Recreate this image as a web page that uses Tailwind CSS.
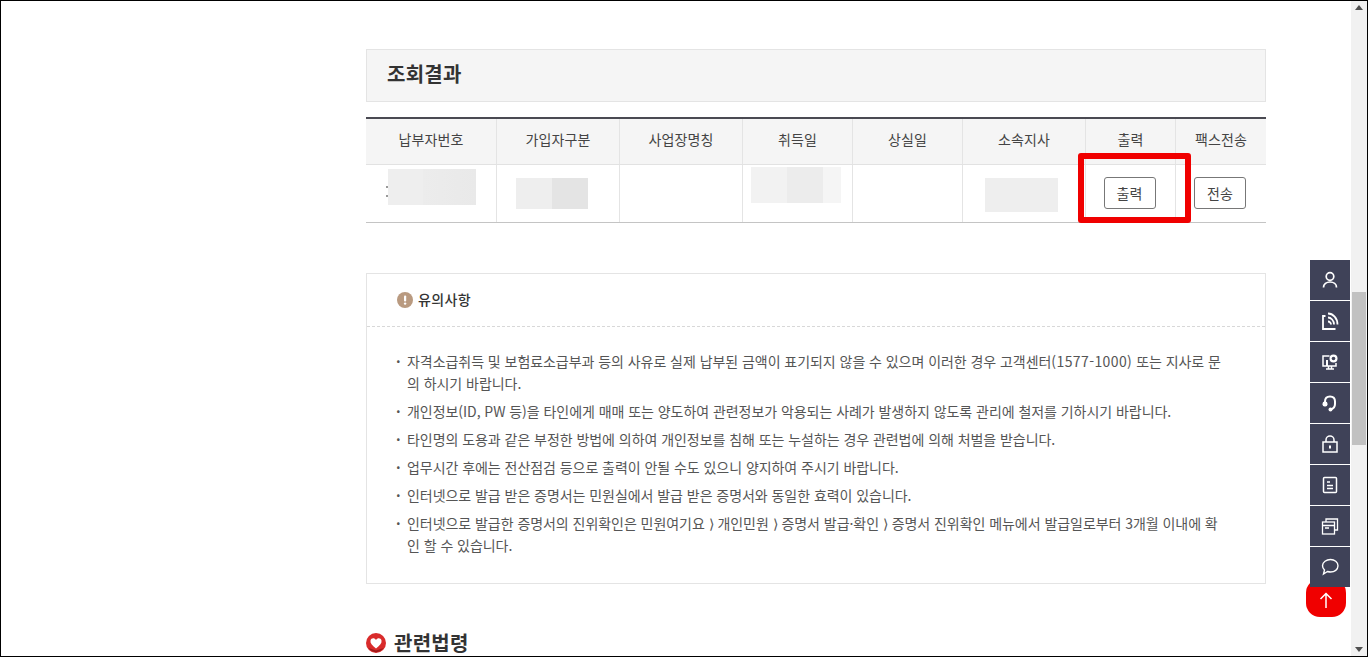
<!DOCTYPE html>
<html lang="ko">
<head>
<meta charset="utf-8">
<title>조회결과</title>
<script src="https://cdn.jsdelivr.net/npm/@tailwindcss/browser@4"></script>
</head>
<body class="bg-white overflow-hidden">
<div class="relative w-[1368px] h-[657px] overflow-hidden border border-black bg-white text-[#444] font-['Noto_Sans_CJK_KR','Noto_Sans',sans-serif]">
  <div class="absolute right-0 top-0 bottom-0 w-[16px] bg-[#f1f1f1] flex flex-col">
    <div class="absolute left-[1px] top-[291px] w-[14px] h-[153px] bg-[#c1c1c1]"></div>
    <svg class="absolute left-[4px] top-[4px]" width="8" height="5" viewBox="0 0 8 5"><path d="M0 5L4 0L8 5Z" fill="#505050"/></svg>
    <svg class="absolute left-[4px] bottom-[4px]" width="8" height="5" viewBox="0 0 8 5"><path d="M0 0L4 5L8 0Z" fill="#505050"/></svg>
  </div>

  <main class="ml-[365px] w-[900px] pt-[48px]">
    <div class="h-[53px] bg-[#f5f5f5] border border-[#e4e4e4] pl-[20px] pb-[3px] flex items-center">
      <h2 class="text-[20px] font-bold text-[#333] tracking-[0.25px]">조회결과</h2>
    </div>

    <div class="mt-[15px] border-t-2 border-[#4a4a52] border-b border-b-[#c4c4c4] text-[14px]">
      <div class="grid grid-cols-[131px_123px_123px_110px_110px_123px_90px_90px] h-[46px] bg-[#f5f5f5] border-b border-[#e2e2e2] tracking-[0.1px]">
        <div class="flex items-center justify-center border-r border-[#e4e4e4] pb-[5px]">납부자번호</div>
        <div class="flex items-center justify-center border-r border-[#e4e4e4] pb-[5px]">가입자구분</div>
        <div class="flex items-center justify-center border-r border-[#e4e4e4] pb-[5px]">사업장명칭</div>
        <div class="flex items-center justify-center border-r border-[#e4e4e4] pb-[5px]">취득일</div>
        <div class="flex items-center justify-center border-r border-[#e4e4e4] pb-[5px]">상실일</div>
        <div class="flex items-center justify-center border-r border-[#e4e4e4] pb-[5px]">소속지사</div>
        <div class="flex items-center justify-center border-r border-[#e4e4e4] pb-[5px]">출력</div>
        <div class="flex items-center justify-center pb-[5px]">팩스전송</div>
      </div>
      <div class="grid grid-cols-[131px_123px_123px_110px_110px_123px_90px_90px] h-[57px]">
        <div class="border-r border-[#e4e4e4] pl-[20px] pt-[4px] flex items-start">
          <div class="flex flex-col gap-[7px] pt-[17px]"><div class="w-[2px] h-[2px] bg-[#999]"></div><div class="w-[2px] h-[2px] bg-[#999]"></div></div>
          <div class="w-[88px] h-[36px] bg-[linear-gradient(90deg,#eeeeee_40%,#ececec_40%,#e9e9e9_100%)]"></div>
        </div>
        <div class="border-r border-[#e4e4e4] pl-[19px] pt-[13px]"><div class="flex w-[72px] h-[31px]"><div class="w-[36px] bg-[#eeeeee]"></div><div class="w-[36px] bg-[#e4e4e4]"></div></div></div>
        <div class="border-r border-[#e4e4e4]"></div>
        <div class="border-r border-[#e4e4e4] pl-[8px] pt-[2px]"><div class="w-[90px] h-[36px] bg-[linear-gradient(90deg,#f2f2f2_40%,#ececec_40%,#ececec_80%,#f5f5f5_80%)]"></div></div>
        <div class="border-r border-[#e4e4e4]"></div>
        <div class="border-r border-[#e4e4e4] pl-[22px] pt-[13px]"><div class="w-[73px] h-[34px] bg-[#eeeeee]"></div></div>
        <div class="border-r border-[#e4e4e4] flex items-center justify-center pr-[2px] pb-[1px]"><button class="w-[52px] h-[32px] bg-white border border-[#777] rounded-[3px] text-[14px] tracking-[0.1px]">출력</button></div>
        <div class="flex items-center pl-[18px] pb-[1px]"><button class="w-[52px] h-[32px] bg-white border border-[#777] rounded-[3px] text-[14px] tracking-[0.1px]">전송</button></div>
      </div>
    </div>

    <section class="mt-[50px] h-[311px] border border-[#e4e4e4]">
      <div class="h-[53px] border-b border-dashed border-[#d8d8d8] pl-[30px] pb-[1px] flex items-center gap-[5px]">
        <svg width="16" height="16" viewBox="0 0 16 16"><circle cx="8" cy="8" r="8" fill="#b99a80"/><rect x="7" y="3.5" width="2.2" height="6" rx="1" fill="#fff"/><circle cx="8.1" cy="11.6" r="1.2" fill="#fff"/></svg>
        <h3 class="text-[14px] font-medium text-[#333] tracking-[0.4px]">유의사항</h3>
      </div>
      <ul class="pt-[23px] pl-[29px] pr-[30px] text-[14px] leading-[22px] tracking-[-0.05px] text-[#555] flex flex-col gap-[6px]">
        <li class="relative pl-[11px] before:content-['·'] before:absolute before:left-0 before:font-bold">자격소급취득 및 보험료소급부과 등의 사유로 실제 납부된 금액이 표기되지 않을 수 있으며 이러한 경우 고객센터<span class="tracking-[0.4px]">(1577-1000)</span> 또는 지사로 문<br>의 하시기 바랍니다.</li>
        <li class="relative pl-[11px] before:content-['·'] before:absolute before:left-0 before:font-bold">개인정보(ID, PW 등)을 타인에게 매매 또는 양도하여 관련정보가 악용되는 사례가 발생하지 않도록 관리에 철저를 기하시기 바랍니다.</li>
        <li class="relative pl-[11px] before:content-['·'] before:absolute before:left-0 before:font-bold">타인명의 도용과 같은 부정한 방법에 의하여 개인정보를 침해 또는 누설하는 경우 관련법에 의해 처벌을 받습니다.</li>
        <li class="relative pl-[11px] before:content-['·'] before:absolute before:left-0 before:font-bold">업무시간 후에는 전산점검 등으로 출력이 안될 수도 있으니 양지하여 주시기 바랍니다.</li>
        <li class="relative pl-[11px] before:content-['·'] before:absolute before:left-0 before:font-bold">인터넷으로 발급 받은 증명서는 민원실에서 발급 받은 증명서와 동일한 효력이 있습니다.</li>
        <li class="relative pl-[11px] before:content-['·'] before:absolute before:left-0 before:font-bold">인터넷으로 발급한 증명서의 진위확인은 민원여기요 ⟩ 개인민원 ⟩ 증명서 발급·확인 ⟩ 증명서 진위확인 메뉴에서 발급일로부터 3개월 이내에 확<br>인 할 수 있습니다.</li>
      </ul>
    </section>

    <div class="mt-[44px] flex items-center gap-[8px]">
      <svg width="20" height="20" viewBox="0 0 20 20"><circle cx="10" cy="10" r="10" fill="#d92b2b"/><path d="M10 15.500C6 12.500 4 10 4.500 7.500C5 5 8.500 4.500 10 7C11.500 4.500 15 5 15.500 7.500C16 10 14 12.500 10 15.500Z" fill="#fff"/><path d="M2.500 15C6 20.500 14 20.500 17.500 15L10 17.500Z" fill="#9e1a1a"/></svg>
      <h2 class="text-[20px] font-bold text-[#333] tracking-[0.25px]">관련법령</h2>
    </div>
  </main>

  <!-- red box highlight -->
  <div class="absolute left-[1077px] top-[152px] w-[113px] h-[70px] border-[6px] border-[#f00000] rounded-[3px]"></div>

  <!-- top button -->
  <div class="absolute left-[1305px] top-[578px] w-[40px] h-[38px] bg-[#f00000] rounded-[14px] flex items-end justify-center pb-[9px]">
    <svg width="14" height="16" viewBox="0 0 14 16" fill="none" stroke="#fff" stroke-width="1.500"><path d="M7 16V1M1.500 7L7 1.500L12.500 7"/></svg>
  </div>

  <!-- side quick menu -->
  <nav class="absolute left-[1309px] top-[259px] w-[40px] flex flex-col gap-[1px]">
    <a class="h-[40px] bg-[#3f4258] flex items-center justify-center"><svg width="18" height="18" viewBox="0 0 18 18" fill="none" stroke="#fff" stroke-width="1.700"><circle cx="9" cy="5.500" r="3.800"/><path d="M2.500 16.500C2.500 12.800 5.500 11 9 11S15.500 12.800 15.500 16.500"/></svg></a>
    <a class="h-[40px] bg-[#3f4258] flex items-center justify-center"><svg width="18" height="18" viewBox="0 0 18 18" fill="none" stroke="#fff" stroke-width="1.800"><path d="M4.500 4H2V17H14.500"/><path d="M7 1.500C12 1.500 16.500 6 16.500 12.500M7 5.500C10 5.500 13 8.500 13 12.500M7 9.500C8.500 9.500 10 11 10 12.500"/></svg></a>
    <a class="h-[40px] bg-[#3f4258] flex items-center justify-center"><svg width="18" height="18" viewBox="0 0 18 18" fill="none" stroke="#fff" stroke-width="1.500"><path d="M8.500 3H2V13H15V10"/><path d="M5 16H13M7.500 13V16M10.500 13V16"/><rect x="5" y="7" width="2" height="6" fill="#fff" stroke="none"/><circle cx="12.500" cy="5.500" r="4" fill="#fff" stroke="none"/><circle cx="12.500" cy="5.500" r="1.800" fill="#3f4258" stroke="none"/></svg></a>
    <a class="h-[40px] bg-[#3f4258] flex items-center justify-center"><svg width="18" height="18" viewBox="0 0 18 18" fill="none" stroke="#fff" stroke-width="2"><path d="M4 9V7.500C4 4.500 6 2.500 9 2.500S14 4.500 14 7.500V10C14 12.500 12.500 14.500 10 15.500"/><rect x="1.500" y="7.500" width="5" height="5" rx="2.200" fill="#fff" stroke="none"/><circle cx="9.500" cy="15.500" r="2" fill="#fff" stroke="none"/></svg></a>
    <a class="h-[40px] bg-[#3f4258] flex items-center justify-center"><svg width="18" height="18" viewBox="0 0 18 18" fill="none" stroke="#fff" stroke-width="1.500"><rect x="2" y="7" width="14" height="10"/><path d="M5 7V5C5 2.500 7 1 9 1S13 2.500 13 5V7"/><rect x="8" y="10.500" width="2" height="3" fill="#fff" stroke="none"/></svg></a>
    <a class="h-[40px] bg-[#3f4258] flex items-center justify-center"><svg width="16" height="18" viewBox="0 0 16 18" fill="none" stroke="#fff" stroke-width="1.500"><rect x="1.500" y="1.500" width="13" height="15" rx="1"/><path d="M5 6H8M5 9.500H11M5 12.500H11"/></svg></a>
    <a class="h-[40px] bg-[#3f4258] flex items-center justify-center"><svg width="18" height="18" viewBox="0 0 18 18" fill="none" stroke="#fff" stroke-width="1.300"><rect x="1.500" y="5" width="12" height="12"/><path d="M5 5V2H16.500V13H13.500M1.500 8.500H13.500M4 11H8"/></svg></a>
    <a class="h-[40px] bg-[#3f4258] flex items-center justify-center"><svg width="18" height="18" viewBox="0 0 18 18" fill="none" stroke="#fff" stroke-width="1.400"><path d="M9.500 1.500C13.500 1.500 17 4 17 7.800S13.500 14 9.500 14C8.500 14 7.500 13.800 6.500 13.500L2.500 16L3.500 12C2.300 10.800 1.500 9.400 1.500 7.800C1.500 4 5.500 1.500 9.500 1.500Z"/></svg></a>
  </nav>
</div>
</body>
</html>
